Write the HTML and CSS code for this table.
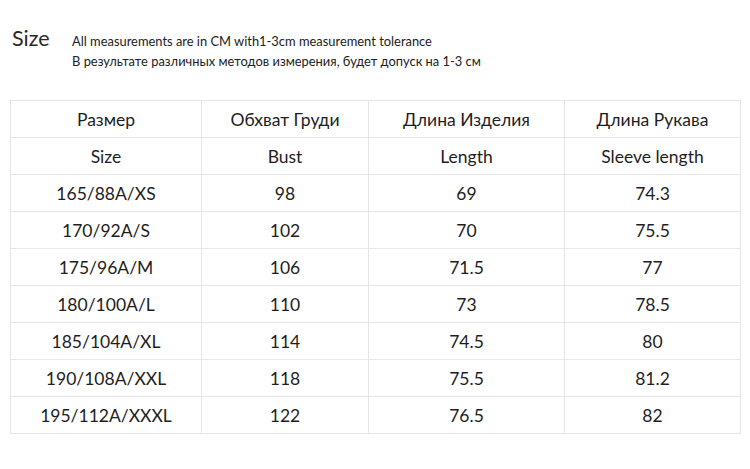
FILE: index.html
```html
<!DOCTYPE html>
<html lang="ru">
<head>
<meta charset="utf-8">
<link rel="stylesheet" href="styles.css">
</head>
<body>
<div class="page">
  <header class="head">
    <div class="title">Size</div>
    <div class="notes">
      <div class="note">All measurements are in CM with1-3cm measurement tolerance</div>
      <div class="note">В результате различных методов измерения, будет допуск на 1-3 см</div>
    </div>
  </header>
  <table class="sizes">
    <colgroup>
      <col class="c1"><col class="c2"><col class="c3"><col class="c4">
    </colgroup>
    <tbody>
      <tr><td>Размер</td><td>Обхват Груди</td><td>Длина Изделия</td><td>Длина Рукава</td></tr>
      <tr><td>Size</td><td>Bust</td><td>Length</td><td>Sleeve length</td></tr>
      <tr><td>165/88A/XS</td><td>98</td><td>69</td><td>74.3</td></tr>
      <tr><td>170/92A/S</td><td>102</td><td>70</td><td>75.5</td></tr>
      <tr><td>175/96A/M</td><td>106</td><td>71.5</td><td>77</td></tr>
      <tr><td>180/100A/L</td><td>110</td><td>73</td><td>78.5</td></tr>
      <tr><td>185/104A/XL</td><td>114</td><td>74.5</td><td>80</td></tr>
      <tr><td>190/108A/XXL</td><td>118</td><td>75.5</td><td>81.2</td></tr>
      <tr><td>195/112A/XXXL</td><td>122</td><td>76.5</td><td>82</td></tr>
    </tbody>
  </table>
</div>
</body>
</html>
```
FILE: styles.css
```css
html, body {
  margin: 0;
  padding: 0;
  background: #ffffff;
}
body {
  font-family: Lato, "Open Sans", sans-serif;
  color: #1e1e1e;
}
.page {
  width: 750px;
  height: 469px;
  padding: 0 0 0 10px;
  box-sizing: border-box;
}
.head {
  display: flex;
  align-items: flex-start;
  padding-top: 26px;
  height: 100px;
  box-sizing: border-box;
}
.title {
  font-size: 21.5px;
  line-height: 24px;
  color: #2a2a2a;
  width: 60px;
  padding-left: 2px;
}
.notes {
  padding-top: 5px;
  font-size: 12.9px;
  line-height: 20px;
  color: #222;
}
.sizes {
  border-collapse: collapse;
  width: 730px;
  table-layout: fixed;
}
.c1 { width: 191px; }
.c2 { width: 167px; }
.c3 { width: 196px; }
.c4 { width: 176px; }
.sizes td {
  border: 1px solid #e6e6e6;
  height: 36px;
  padding: 0;
  text-align: center;
  vertical-align: middle;
  font-size: 17.5px;
  color: #1e1e1e;
}
```
